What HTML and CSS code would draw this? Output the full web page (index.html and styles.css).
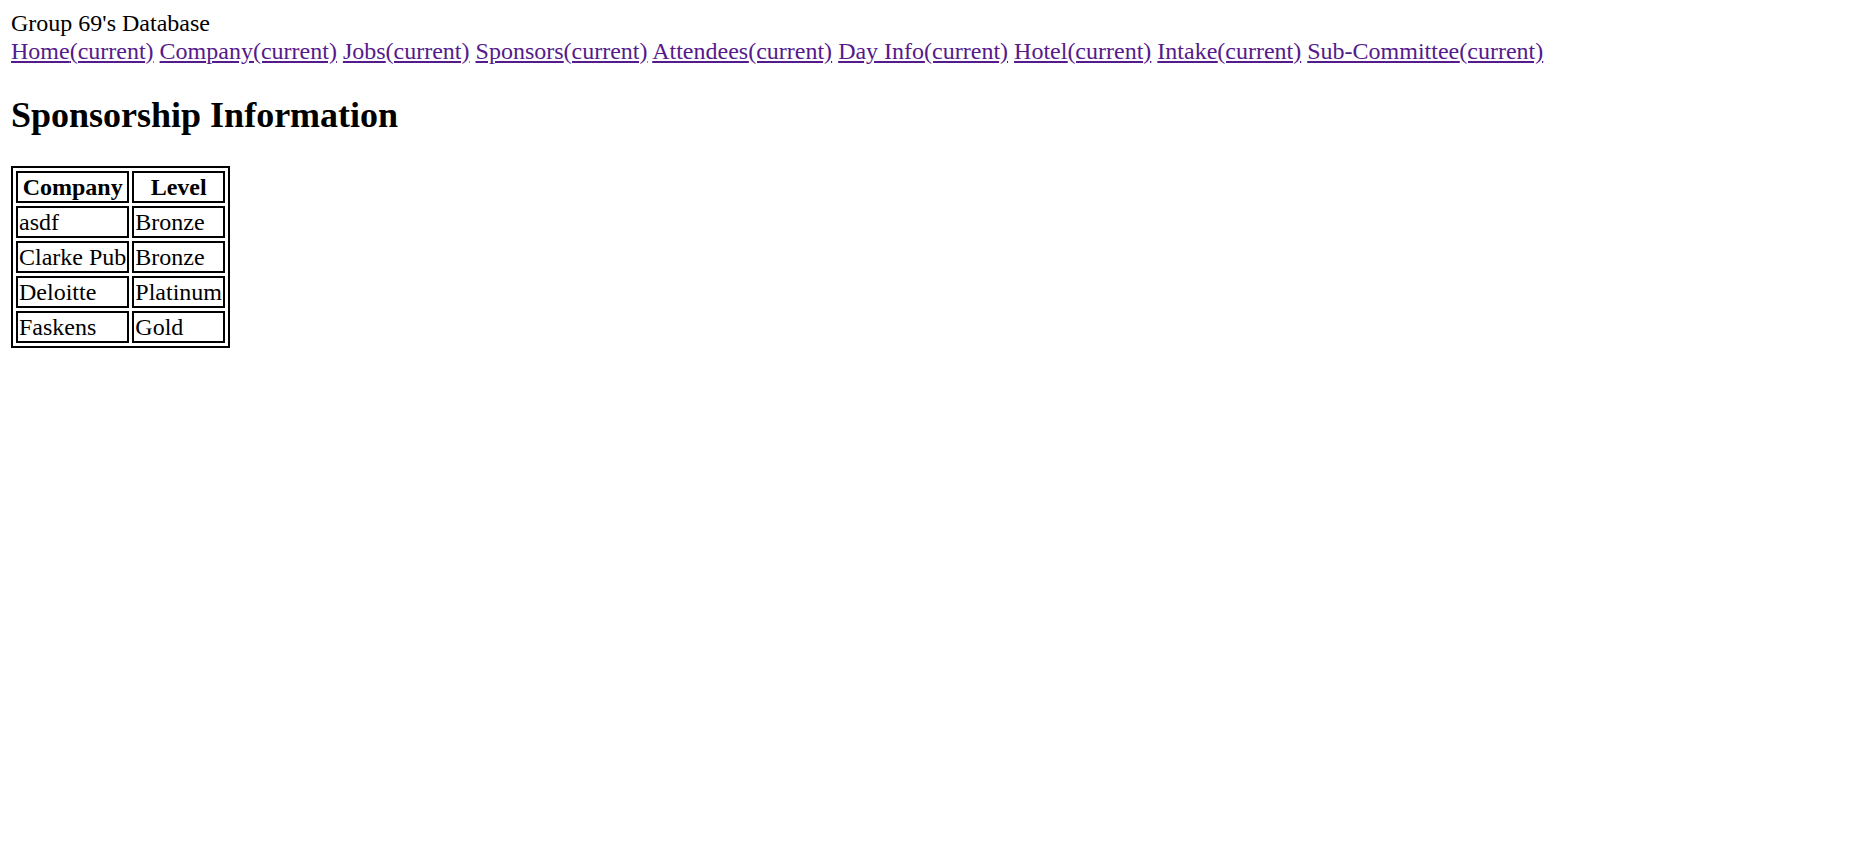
FILE: index.html
```
<!DOCTYPE html>
<html>
<head>
<meta charset="utf-8">
<title>Sponsorship Information</title>
<link rel="stylesheet" href="styles.css">
</head>
<body>
<div class="page">
  <div class="brand">Group 69's Database</div>
  <nav class="nav">
    <a class="nav-link" href="#">Home<span>(current)</span></a>
    <a class="nav-link" href="#">Company<span>(current)</span></a>
    <a class="nav-link" href="#">Jobs<span>(current)</span></a>
    <a class="nav-link" href="#">Sponsors<span>(current)</span></a>
    <a class="nav-link" href="#">Attendees<span>(current)</span></a>
    <a class="nav-link" href="#">Day Info<span>(current)</span></a>
    <a class="nav-link" href="#">Hotel<span>(current)</span></a>
    <a class="nav-link" href="#">Intake<span>(current)</span></a>
    <a class="nav-link" href="#">Sub-Committee<span>(current)</span></a>
  </nav>
  <section class="content">
    <h1 class="title">Sponsorship Information</h1>
    <table class="grid">
      <thead>
        <tr><th>Company</th><th>Level</th></tr>
      </thead>
      <tbody>
        <tr><td>asdf</td><td>Bronze</td></tr>
        <tr><td>Clarke Pub</td><td>Bronze</td></tr>
        <tr><td>Deloitte</td><td>Platinum</td></tr>
        <tr><td>Faskens</td><td>Gold</td></tr>
      </tbody>
    </table>
  </section>
</div>
</body>
</html>
```
FILE: styles.css
```
html, body {
  margin: 0;
  padding: 0;
  background: #ffffff;
}

.page {
  padding: 10px 11px;
  font-family: "Liberation Serif", "Times New Roman", serif;
  font-size: 24px;
  color: #000000;
}

.brand {
  line-height: 27.6px;
}

.nav {
  line-height: 27.6px;
}

.nav-link {
  color: #551a8b;
  text-decoration: underline;
}

.title {
  font-size: 36px;
  font-weight: bold;
  line-height: 41px;
  margin: 30px 0 30px 0;
}

.grid {
  border: 2px solid #000000;
  border-spacing: 3px;
  font-size: 24px;
}

.grid th,
.grid td {
  border: 2px solid #000000;
  padding: 0 1px;
  line-height: 28px;
  text-align: left;
  white-space: nowrap;
}

.grid th {
  font-weight: bold;
  text-align: center;
}
```
